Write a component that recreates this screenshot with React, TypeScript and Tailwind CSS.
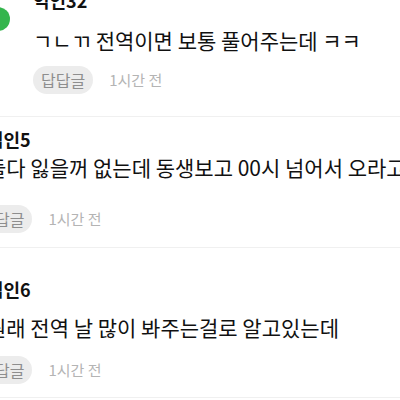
import React from "react";

// comment thread snippet (scrolled, so the first name is cut at the top)

type Comment = {
    name: string;
    body: string;
    replyLabel: string;
    time: string;
    reply?: boolean;
    pad: string;      // padding around the block
    nameGap: string;  // name -> body
    bodyGap: string;  // body -> actions
};

const COMMENTS: Comment[] = [
    {
        name: "익인32",
        body: "ㄱㄴㄲ 전역이면 보통 풀어주는데 ㅋㅋ",
        replyLabel: "답답글",
        time: "1시간 전",
        reply: true,
        pad: "pt-0 pb-[22px]",
        nameGap: "mt-[17px]",
        bodyGap: "mt-[13px]",
    },
    {
        name: "익인5",
        body: "둘다 잃을꺼 없는데 동생보고 00시 넘어서 오라고",
        replyLabel: "답글",
        time: "1시간 전",
        pad: "pt-[12px] pb-[14px]",
        nameGap: "mt-[5px]",
        bodyGap: "mt-[25px]",
    },
    {
        name: "익인6",
        body: "원래 전역 날 많이 봐주는걸로 알고있는데",
        replyLabel: "답글",
        time: "1시간 전",
        pad: "pt-[31px] pb-[13px]",
        nameGap: "mt-[15px]",
        bodyGap: "mt-[16px]",
    },
];

function CommentRow({ c }: { c: Comment }) {
    return (
        <div className="border-b border-[#f0f0f0]">
            <div className={`relative ${c.pad} ${c.reply ? "pl-[33px]" : "ml-[-13px]"}`}>
                {c.reply && (
                    <div className="absolute left-[-14px] top-[17px] h-6 w-6 rounded-full bg-[#33b54c]" />
                )}
                <div className="text-[18px] leading-[21px] font-bold text-[#111] whitespace-nowrap">
                    {c.name}
                </div>
                <div className={`${c.nameGap} text-[21px] leading-[25px] text-[#111] whitespace-nowrap`}>
                    {c.body}
                </div>
                <div className={`${c.bodyGap} flex items-center gap-4`}>
                    <span className="h-7 rounded-full bg-[#ececec] px-[8px] text-[16px] leading-7 text-[#8e8e8e]">
                        {c.replyLabel}
                    </span>
                    <span className="text-[15px] leading-7 text-[#b4b4b4]">{c.time}</span>
                </div>
            </div>
        </div>
    );
}

export default function App() {
    return (
        <div
            className="h-[400px] w-[400px] overflow-hidden bg-white"
            style={{ fontFamily: '"Noto Sans CJK KR", "Noto Sans", sans-serif' }}
        >
            <div className="-mt-[10px]">
                {COMMENTS.map((c) => (
                    <CommentRow key={c.name} c={c} />
                ))}
            </div>
        </div>
    );
}
